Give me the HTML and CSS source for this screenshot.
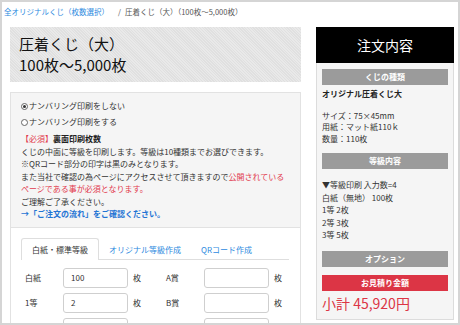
FILE: index.html
```html
<!DOCTYPE html>
<html lang="ja">
<head>
    <meta charset="UTF-8">
    <meta name="viewport" content="width=device-width, initial-scale=1.0">
    <title>圧着くじ（大）</title>
    <link rel="stylesheet" href="styles.css">
</head>
<body>
<div class="frame">

    <!-- Breadcrumb -->
    <nav class="crumb">
        <a href="#">全オリジナルくじ（枚数選択）</a><span class="sep">/</span><span>圧着くじ（大）（100枚〜5,000枚）</span>
    </nav>

    <div class="main">
        <div class="content">
            <h1 class="title">圧着くじ（大）<br>100枚〜5,000枚</h1>

            <div class="card">
                <div class="card-head">
                    <label class="radio"><span class="dot on"></span>ナンバリング印刷をしない</label>
                    <label class="radio"><span class="dot"></span>ナンバリング印刷をする</label>
                    <p class="req"><span class="red">【必須】</span><b>裏面印刷枚数</b></p>
                    <p>くじの中面に等級を印刷します。等級は10種類までお選びできます。</p>
                    <p>※QRコード部分の印字は黒のみとなります。</p>
                    <p>また当社で確認の為ページにアクセスさせて頂きますので<span class="red">公開されているページである事が必須となります。</span></p>
                    <p>ご理解ご了承ください。</p>
                    <p><a class="flow" href="#">→「ご注文の流れ」をご確認ください。</a></p>
                </div>

                <div class="card-body">
                    <ul class="tabs">
                        <li class="tab active">白紙・標準等級</li>
                        <li class="tab">オリジナル等級作成</li>
                        <li class="tab">QRコード作成</li>
                    </ul>

                    <div class="grid">
                        <span>白紙</span><input class="num" value="100"><span class="unit">枚</span>
                        <span>A賞</span><input class="num" value=""><span class="unit">枚</span>

                        <span>1等</span><input class="num" value="2"><span class="unit">枚</span>
                        <span>B賞</span><input class="num" value=""><span class="unit">枚</span>

                        <span></span><input class="num" value=""><span></span>
                        <span></span><input class="num" value=""><span></span>
                    </div>
                </div>
            </div>
        </div>

        <!-- Order summary -->
        <aside class="order">
            <div class="order-head">注文内容</div>
            <div class="order-body">
                <div class="bar">くじの種類</div>
                <p class="kind">オリジナル圧着くじ大</p>
                <div class="spec">
                    <p>サイズ：75×45mm</p>
                    <p>用紙：マット紙110ｋ</p>
                    <p>数量：110枚</p>
                </div>

                <div class="bar gap">等級内容</div>
                <div class="grades">
                    <p>▼等級印刷 入力数=4</p>
                    <p>白紙（無地） 100枚</p>
                    <p>1等 2枚</p>
                    <p>2等 3枚</p>
                    <p>3等 5枚</p>
                </div>

                <div class="bar gap">オプション</div>
                <div class="bar red-bar">お見積り金額</div>
                <p class="total">小計 45,920円</p>
            </div>
        </aside>
    </div>

</div>
</body>
</html>
```

FILE: styles.css
```css
body {
    margin: 0;
    background: #fff;
}

p {
    margin: 0;
}

.frame {
    width: 460px;
    height: 325px;
    box-sizing: border-box;
    border: 2px solid #d5d5d5;
    overflow: hidden;
    font-family: "Noto Sans CJK JP", "Noto Sans", sans-serif;
    color: #333;
}

.crumb {
    height: 25px;
    box-sizing: border-box;
    padding: 5px 0 0 2px;
    font-size: 7.5px;
    line-height: 10px;
    color: #555;
}

.crumb a {
    color: #2d8ae0;
    text-decoration: none;
}

.sep {
    margin: 0 4px 0 9px;
}

.main {
    display: flex;
    gap: 15px;
    padding-left: 8px;
}

.content {
    width: 291px;
    flex-shrink: 0;
}

.title {
    margin: 0;
    height: 55px;
    box-sizing: border-box;
    padding: 6px 9px;
    font-size: 15px;
    line-height: 21px;
    font-weight: 400;
    color: #111;
    background: repeating-linear-gradient(45deg, #e0e0e0 0 1px, #e9e9e9 1px 2px);
}

.card {
    margin-top: 10px;
    border: 1px solid #e2e2e2;
}

.card-head {
    background: #f5f5f5;
    padding: 5px 10px 6px;
    font-size: 8px;
    line-height: 12.5px;
    border-bottom: 1px solid #e2e2e2;
}

.radio {
    display: flex;
    align-items: center;
    height: 16px;
}

.dot {
    width: 7px;
    height: 7px;
    box-sizing: border-box;
    border: 1px solid #666;
    border-radius: 50%;
    background: #fff;
    margin-right: 1px;
    position: relative;
}

.dot.on::after {
    content: "";
    position: absolute;
    left: 1px;
    top: 1px;
    width: 3px;
    height: 3px;
    border-radius: 50%;
    background: #333;
}

.req {
    margin-top: 3px;
}

.req b {
    color: #222;
}

.red {
    color: #e23a4e;
}

.flow {
    color: #1f74d4;
    font-weight: bold;
    text-decoration: none;
}

.card-body {
    padding: 10px 11px 0 10px;
}

.tabs {
    display: flex;
    list-style: none;
    margin: 0;
    padding: 0;
    height: 22px;
    box-sizing: border-box;
    border-bottom: 1px solid #dedede;
    font-size: 8px;
}

.tab {
    height: 22px;
    box-sizing: border-box;
    display: flex;
    align-items: center;
    padding: 0 9px;
    border: 1px solid transparent;
    border-bottom: 0;
    color: #2d8ae0;
}

.tab.active {
    padding: 0 10px;
    border-color: #dedede;
    border-radius: 3px 3px 0 0;
    background: #fff;
    color: #333;
}

.grid {
    margin-top: 8px;
    padding-left: 4px;
    display: grid;
    grid-template-columns: 38px 65px 38px 38px 65px auto;
    row-gap: 5px;
    align-items: center;
    font-size: 8px;
}

.num {
    width: 65px;
    height: 20px;
    box-sizing: border-box;
    border: 1px solid #cfcfcf;
    border-radius: 3px;
    padding: 0 7px;
    font-family: inherit;
    font-size: 8px;
    color: #333;
    background: #fff;
}

.unit {
    padding-left: 5px;
}

.order {
    width: 138px;
    flex-shrink: 0;
}

.order-head {
    height: 36px;
    background: #000;
    color: #fff;
    font-size: 14px;
    display: flex;
    align-items: center;
    justify-content: center;
}

.order-body {
    background: #f5f5f5;
    border: 1px solid #dcdcdc;
    border-top: 0;
    padding: 6px 5px 7px;
    font-size: 8px;
    line-height: 11.5px;
}

.bar {
    height: 16px;
    line-height: 16px;
    background: #9b9b9b;
    color: #fff;
    font-weight: bold;
    text-align: center;
}

.bar.gap {
    margin-top: 9px;
}

.kind {
    margin-top: 3px;
    font-weight: bold;
    color: #222;
}

.spec {
    margin-top: 10px;
}

.grades {
    margin-top: 10px;
    line-height: 12.5px;
}

.red-bar {
    margin-top: 8px;
    background: #dc3545;
}

.total {
    margin-top: 3px;
    font-size: 14px;
    line-height: 18px;
    color: #dc3545;
}
```
